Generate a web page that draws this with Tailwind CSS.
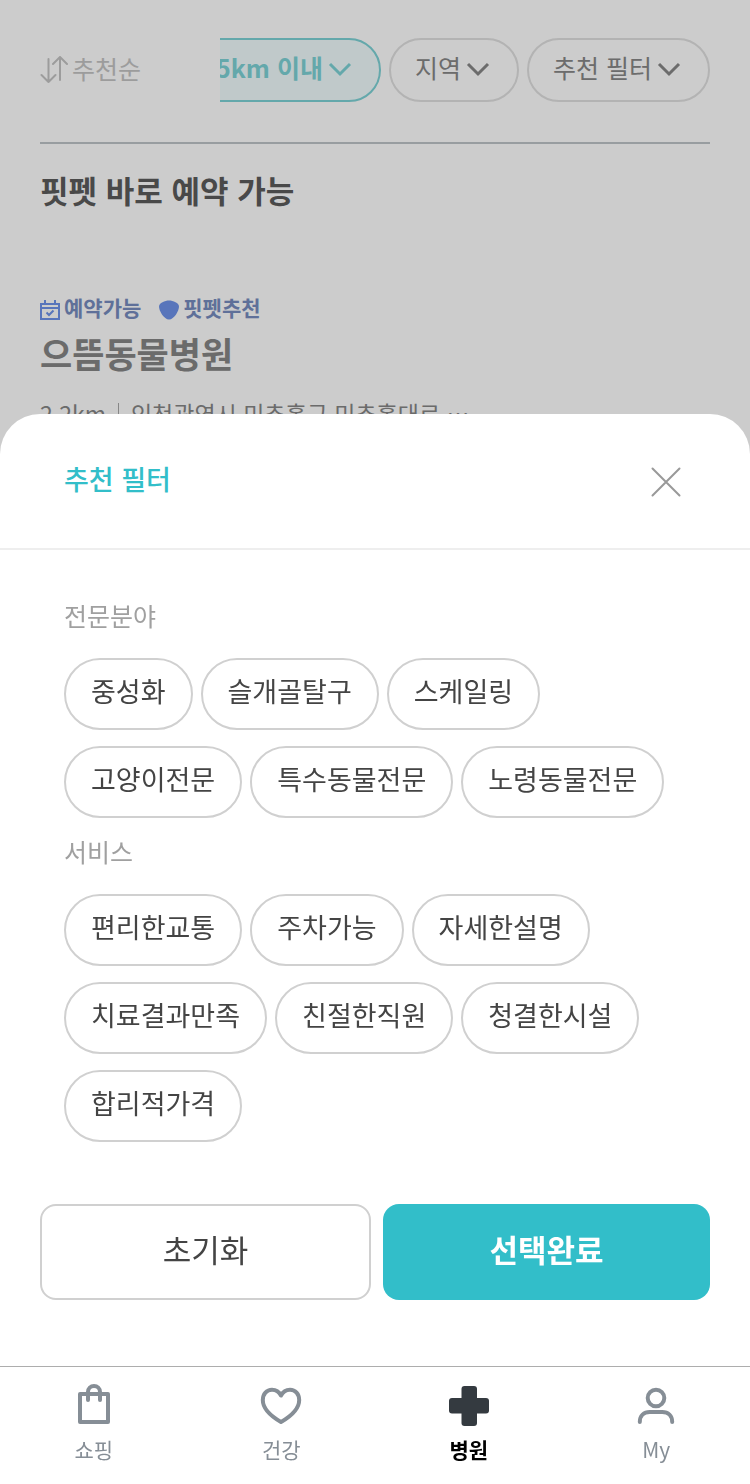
<!DOCTYPE html>
<html lang="ko">

<head>
  <meta charset="UTF-8" />
  <meta name="viewport" content="width=device-width, initial-scale=1.0" />
  <title>핏펫 병원</title>
  <script src="https://cdn.jsdelivr.net/npm/@tailwindcss/browser@4"></script>
</head>

<body class="min-h-screen bg-white font-['Noto_Sans_CJK_KR',sans-serif] text-[#444]">
  <!-- Hospital list -->
  <main class="px-10 pt-[38px]">
    <div class="flex items-center justify-between pb-10 border-b-2 border-[#bfc5c8]">
      <button type="button" class="flex shrink-0 items-center gap-1 pb-1 text-[25px] leading-[60px] text-[#c4c4c4]">
        <svg class="mt-1 size-7" viewBox="0 0 28 28" fill="none" stroke="currentColor" stroke-width="2" stroke-linecap="round"
          stroke-linejoin="round">
          <path d="M8.5 3v23M1.5 19l7 7 7-7M20 24V1M13 8l7-7 7 7" />
        </svg>
        추천순
      </button>
      <div class="flex w-[490px] justify-end gap-2 overflow-hidden text-[25px] leading-[56px] text-[#878787]">
        <button type="button"
          class="flex h-16 shrink-0 items-center rounded-full border-2 border-[#7dd2d6] bg-[#f0fcfd] px-6 pb-1.5 font-bold text-[#7dd2d6]">
          5km 이내
          <svg class="mt-1 size-8" viewBox="0 0 32 32" fill="none" stroke="currentColor" stroke-width="3">
            <path d="M7 11l10 10 10-10" />
          </svg>
        </button>
        <button type="button" class="flex h-16 shrink-0 items-center rounded-full border-2 border-[#e0e0e0] px-6 pb-1.5">
          지역
          <svg class="mt-1 size-8" viewBox="0 0 32 32" fill="none" stroke="currentColor" stroke-width="3">
            <path d="M7 11l10 10 10-10" />
          </svg>
        </button>
        <button type="button" class="flex h-16 shrink-0 items-center rounded-full border-2 border-[#e0e0e0] px-6 pb-1.5">
          추천 필터
          <svg class="mt-1 size-8" viewBox="0 0 32 32" fill="none" stroke="currentColor" stroke-width="3">
            <path d="M7 11l10 10 10-10" />
          </svg>
        </button>
      </div>
    </div>

    <h1 class="mt-[22px] text-[31px] leading-12 font-bold text-[#5c5c5c]">핏펫 바로 예약 가능</h1>

    <article class="mt-[77px]">
      <div class="flex gap-[18px] text-[21px] leading-8 font-bold text-[#778cc0]">
        <span class="flex items-center gap-1">
          <svg class="mt-1.5 size-5 text-[#6e93ea]" viewBox="0 0 20 20" fill="none" stroke="currentColor" stroke-width="2">
            <path d="M1 4h18v15H1zM1 8h18M5 0v5M15 0v5" />
            <path d="M6.5 12.5l2.500 2.500 4.500-4.500" />
          </svg>
          예약가능
        </span>
        <span class="flex items-center gap-1">
          <svg class="mt-1.5 size-5 text-[#6e93ea]" viewBox="0 0 20 20" fill="currentColor">
            <path d="M10 0.5C14 0.5 20 3 20 6.5C20 11 15 19.5 10 19.5C5 19.5 0 11 0 6.5C0 3 6 0.5 10 0.5z" />
          </svg>
          핏펫추천
        </span>
      </div>
      <h2 class="mt-1 text-[35px] leading-[52px] font-bold text-[#868686]">으뜸동물병원</h2>
      <p class="mt-4 flex items-center text-[23px] leading-9 text-[#868686]">
        2.2km
        <span class="mx-3 h-5 w-px bg-[#a8a8a8]"></span>
        인천광역시 미추홀구 미추홀대로 ⋯
      </p>
    </article>
  </main>

  <div class="fixed inset-0 bg-black/20"></div>

  <!-- Filter sheet -->
  <div class="fixed inset-x-0 bottom-0">
    <section class="rounded-t-[40px] bg-white" role="dialog" aria-labelledby="filter-title">
      <header class="flex h-[136px] items-center justify-between border-b-2 border-[#eee] px-16">
        <h2 id="filter-title" class="pb-1 text-[27px] leading-10 font-medium text-[#32bec9]">추천 필터</h2>
        <button type="button" aria-label="닫기">
          <svg class="size-10" viewBox="0 0 40 40" fill="none" stroke="#999" stroke-width="2" stroke-linecap="round">
            <path d="M6.5 7.5l27 27M33.5 7.5l-27 27" />
          </svg>
        </button>
      </header>

      <div class="px-16 pt-8">
        <h3 class="pb-2.5 text-[25px] leading-[66px] text-[#a0a0a0]">전문분야</h3>
        <div class="flex flex-wrap gap-x-2 gap-y-4 text-[27px] leading-[62px]">
          <button type="button" class="h-[72px] rounded-full border-2 border-[#d0d0d0] px-[25px] pb-1.5">중성화</button>
          <button type="button" class="h-[72px] rounded-full border-2 border-[#d0d0d0] px-[25px] pb-1.5">슬개골탈구</button>
          <button type="button" class="h-[72px] rounded-full border-2 border-[#d0d0d0] px-[25px] pb-1.5">스케일링</button>
          <button type="button" class="h-[72px] rounded-full border-2 border-[#d0d0d0] px-[25px] pb-1.5">고양이전문</button>
          <button type="button" class="h-[72px] rounded-full border-2 border-[#d0d0d0] px-[25px] pb-1.5">특수동물전문</button>
          <button type="button" class="h-[72px] rounded-full border-2 border-[#d0d0d0] px-[25px] pb-1.5">노령동물전문</button>
        </div>
        <h3 class="pb-2.5 text-[25px] leading-[66px] text-[#a0a0a0]">서비스</h3>
        <div class="flex flex-wrap gap-x-2 gap-y-4 text-[27px] leading-[62px]">
          <button type="button" class="h-[72px] rounded-full border-2 border-[#d0d0d0] px-[25px] pb-1.5">편리한교통</button>
          <button type="button" class="h-[72px] rounded-full border-2 border-[#d0d0d0] px-[25px] pb-1.5">주차가능</button>
          <button type="button" class="h-[72px] rounded-full border-2 border-[#d0d0d0] px-[25px] pb-1.5">자세한설명</button>
          <button type="button" class="h-[72px] rounded-full border-2 border-[#d0d0d0] px-[25px] pb-1.5">치료결과만족</button>
          <button type="button" class="h-[72px] rounded-full border-2 border-[#d0d0d0] px-[25px] pb-1.5">친절한직원</button>
          <button type="button" class="h-[72px] rounded-full border-2 border-[#d0d0d0] px-[25px] pb-1.5">청결한시설</button>
          <button type="button" class="h-[72px] rounded-full border-2 border-[#d0d0d0] px-[25px] pb-1.5">합리적가격</button>
        </div>
      </div>

      <div class="flex gap-3 px-10 pt-[62px] pb-[66px] text-[31px]">
        <button type="button" class="h-24 flex-1 rounded-2xl border-2 border-[#d0d0d0] pb-1.5">초기화</button>
        <button type="button" class="h-24 flex-1 rounded-2xl bg-[#32bec9] pb-1.5 font-bold text-white">선택완료</button>
      </div>
    </section>

    <!-- Tab bar -->
    <nav class="grid h-[118px] grid-cols-4 border-t border-[#adadad] bg-white pt-[15px] text-[21px] leading-[38px] text-[#868e96]">
      <a href="#" class="flex flex-col items-center">
        <svg class="size-12" viewBox="0 0 48 48" fill="none" stroke="currentColor" stroke-width="4" stroke-linecap="round"
          stroke-linejoin="round">
          <path d="M10 12h28v28H10zM18 18V10a6 6 0 0 1 12 0v8" />
        </svg>
        쇼핑
      </a>
      <a href="#" class="flex flex-col items-center">
        <svg class="size-12" viewBox="0 0 48 48" fill="none" stroke="currentColor" stroke-width="4"
          stroke-linejoin="round">
          <path
            d="M24 13.5C22 9.5 18.5 7.7 15 7.7C9.7 7.7 5.8 12 5.8 18C5.8 27 14.5 34.5 24 40C33.5 34.5 42.2 27 42.2 18C42.2 12 38.3 7.7 33 7.7C29.5 7.7 26 9.5 24 13.5z" />
        </svg>
        건강
      </a>
      <a href="#" class="flex flex-col items-center font-bold text-black" aria-current="page">
        <svg class="size-12" viewBox="0 0 48 48" fill="#343a40">
          <rect x="16.5" y="4" width="15.5" height="40" rx="3" />
          <rect x="4" y="16" width="40" height="15.5" rx="3" />
        </svg>
        병원
      </a>
      <a href="#" class="flex flex-col items-center">
        <svg class="size-12" viewBox="0 0 48 48" fill="none" stroke="currentColor" stroke-width="4"
          stroke-linecap="round">
          <circle cx="24" cy="16" r="8.3" />
          <path d="M7.8 40c0-6 4-10 10-10h12.4c6 0 10 4 10 10" />
        </svg>
        My
      </a>
    </nav>
  </div>
</body>

</html>
